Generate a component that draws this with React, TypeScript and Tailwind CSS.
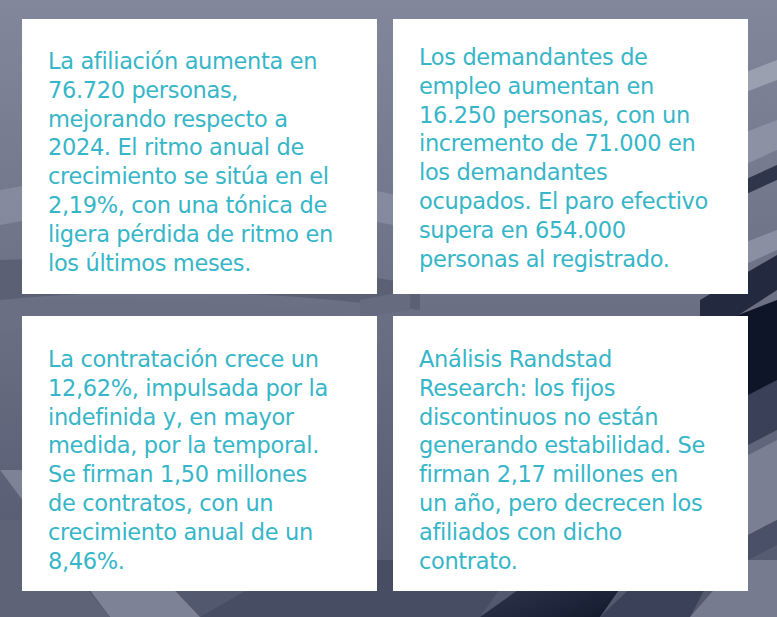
import React from "react";

const boxes: { lines: string[]; pt: string }[] = [
  {
    pt: "pt-[28px]",
    lines: [
      "La afiliación aumenta en",
      "76.720 personas,",
      "mejorando respecto a",
      "2024. El ritmo anual de",
      "crecimiento se sitúa en el",
      "2,19%, con una tónica de",
      "ligera pérdida de ritmo en",
      "los últimos meses.",
    ],
  },
  {
    pt: "pt-[24px]",
    lines: [
      "Los demandantes de",
      "empleo aumentan en",
      "16.250 personas, con un",
      "incremento de 71.000 en",
      "los demandantes",
      "ocupados. El paro efectivo",
      "supera en 654.000",
      "personas al registrado.",
    ],
  },
  {
    pt: "pt-[29px]",
    lines: [
      "La contratación crece un",
      "12,62%, impulsada por la",
      "indefinida y, en mayor",
      "medida, por la temporal.",
      "Se firman 1,50 millones",
      "de contratos, con un",
      "crecimiento anual de un",
      "8,46%.",
    ],
  },
  {
    pt: "pt-[29px]",
    lines: [
      "Análisis Randstad",
      "Research: los fijos",
      "discontinuos no están",
      "generando estabilidad. Se",
      "firman 2,17 millones en",
      "un año, pero decrecen los",
      "afiliados con dicho",
      "contrato.",
    ],
  },
];

function Backdrop() {
  return (
    <svg
      className="absolute inset-0 h-full w-full"
      viewBox="0 0 777 617"
      preserveAspectRatio="none"
      aria-hidden="true"
    >
      <defs>
        <linearGradient id="base" x1="0" y1="0" x2="0" y2="1">
          <stop offset="0" stopColor="#82879b" />
          <stop offset="0.45" stopColor="#6d7287" />
          <stop offset="1" stopColor="#51576d" />
        </linearGradient>
        <linearGradient id="dark" x1="0" y1="0" x2="1" y2="1">
          <stop offset="0" stopColor="#3a4057" />
          <stop offset="1" stopColor="#10162a" />
        </linearGradient>
      </defs>
      <rect width="777" height="617" fill="url(#base)" />
      <path d="M0 190 Q 200 150 420 200 L 420 230 Q 200 185 0 225 Z" fill="#8d92a5" opacity="0.7" />
      <path d="M0 260 Q 220 250 420 285 L 420 310 Q 200 280 0 300 Z" fill="#5b6075" />
      <path d="M0 300 Q 180 295 380 320 L 380 340 Q 180 315 0 330 Z" fill="#6a6f84" />
      <path d="M0 470 L 60 470 L 200 617 L 110 617 Z" fill="#7d8297" />
      <path d="M0 520 L 30 520 L 110 617 L 0 617 Z" fill="#5e6378" />
      <path d="M200 617 L 300 560 L 520 560 L 480 617 Z" fill="#474d63" />
      <path d="M480 617 L 560 560 L 640 560 L 600 617 Z" fill="url(#dark)" />
      <path d="M600 617 L 660 560 L 720 560 L 690 617 Z" fill="#3b4158" />
      <path d="M690 617 L 740 560 L 777 560 L 777 617 Z" fill="#767b90" />
      <path d="M700 90 L 777 60 L 777 80 L 700 110 Z" fill="#9ba0b1" />
      <path d="M700 150 L 777 120 L 777 150 L 700 185 Z" fill="#8c91a3" />
      <path d="M700 200 L 777 165 L 777 180 L 700 215 Z" fill="#2f354b" />
      <path d="M700 260 L 777 230 L 777 250 L 700 285 Z" fill="#8a8fa2" />
      <path d="M700 300 L 777 255 L 777 290 L 700 340 Z" fill="#23293f" />
      <path d="M700 330 L 777 300 L 777 390 L 700 410 Z" fill="#0f1528" />
      <path d="M700 420 L 777 380 L 777 430 L 700 470 Z" fill="#3a4057" />
      <path d="M700 480 L 777 440 L 777 520 L 700 560 Z" fill="#7a7f93" />
      <path d="M700 560 L 777 520 L 777 545 L 700 585 Z" fill="#4a5067" />
      <path d="M360 300 L 410 290 L 410 310 L 360 318 Z" fill="#666b80" />
    </svg>
  );
}

export default function App() {
  return (
    <div className="relative h-[617px] w-[777px] overflow-hidden">
      <Backdrop />
      <div className="relative grid grid-cols-[355px_355px] grid-rows-[275px_275px] gap-x-[16px] gap-y-[22px] pl-[22px] pt-[19px]">
        {boxes.map((b, i) => (
          <div key={i} className={`bg-white pl-[26px] ${b.pt}`}>
            <p
              className="text-[22.5px] leading-[28.8px] tracking-[-0.35px] text-[#36b6c8]"
              style={{ fontFamily: '"DejaVu Sans", Verdana, sans-serif' }}
            >
              {b.lines.map((l, j) => (
                <span key={j} className="block whitespace-nowrap">
                  {l}
                </span>
              ))}
            </p>
          </div>
        ))}
      </div>
    </div>
  );
}
